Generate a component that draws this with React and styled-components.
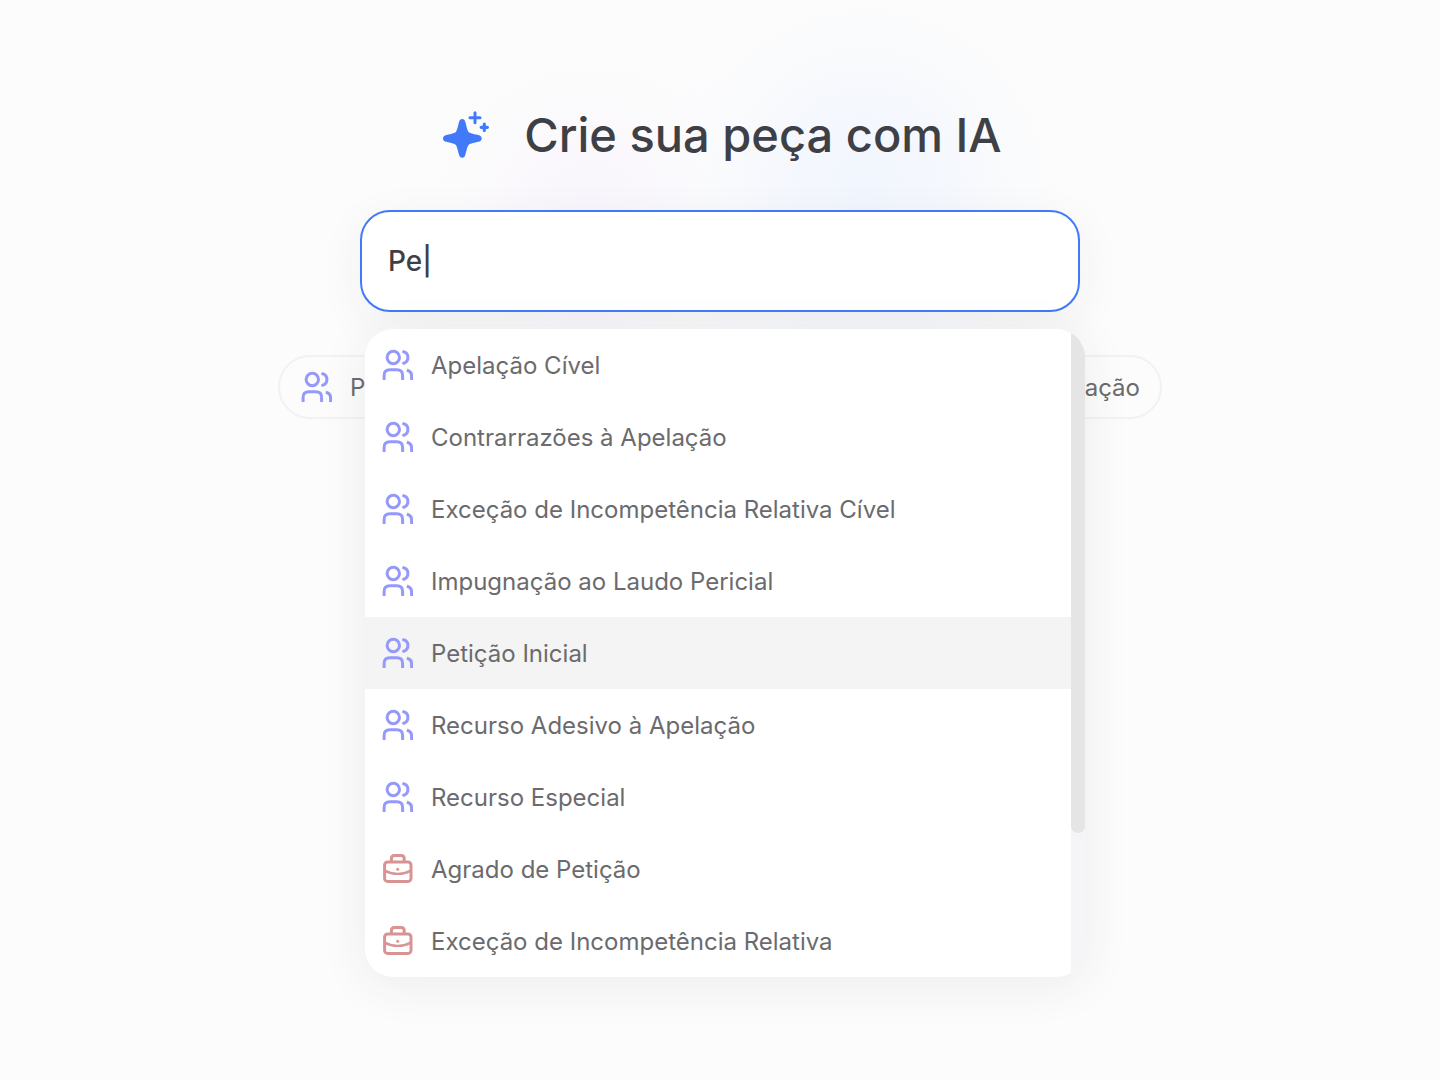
import React from "react";
import styled, { createGlobalStyle } from "styled-components";

const GlobalStyle = createGlobalStyle`
  *, *::before, *::after { box-sizing: border-box; }
  body {
    margin: 0;
    background: #fcfcfc;
    color: #3f3f46;
    font-family: Inter, "Liberation Sans", sans-serif;
  }
`;

const Page = styled.main`
  min-height: 100vh;
  padding: 104px 24px;
  display: flex;
  flex-direction: column;
  align-items: center;
  overflow: hidden;
  background:
    radial-gradient(circle at calc(50% + 145px) 190px, rgba(234, 241, 255, 0.6) 0, rgba(237, 243, 255, 0.45) 90px, rgba(243, 247, 253, 0.2) 150px, transparent 210px),
    radial-gradient(circle at calc(50% - 130px) 220px, rgba(247, 240, 252, 0.6) 0, rgba(248, 242, 252, 0.35) 80px, rgba(250, 247, 252, 0.15) 130px, transparent 200px),
    #fcfcfc;
`;

const Heading = styled.header`
  display: flex;
  align-items: center;
  gap: 34px;
  padding-left: 4px;
`;

const Title = styled.h1`
  margin: 0;
  font-size: 47px;
  line-height: 62px;
  font-weight: 500;
  white-space: nowrap;
`;

const Search = styled.div`
  position: relative;
  width: 100%;
  max-width: 720px;
  margin-top: 44px;
`;

const SearchInput = styled.input`
  display: block;
  width: 100%;
  height: 102px;
  padding: 0 26px;
  border: 2px solid #4279f8;
  border-radius: 30px;
  background: #fff;
  box-shadow: 0 12px 48px rgba(50, 50, 60, 0.06);
  color: inherit;
  font: inherit;
  font-size: 28px;
  font-weight: 500;
  outline: none;
`;

const Dropdown = styled.div`
  position: absolute;
  z-index: 1;
  top: 119px;
  left: 5px;
  width: 100%;
  display: flex;
  overflow: hidden;
  border-radius: 28px;
  background: #fff;
  box-shadow: 0 8px 48px rgba(50, 50, 60, 0.08);
`;

const Options = styled.ul`
  flex: 1;
  min-width: 0;
  margin: 0;
  padding: 0;
  list-style: none;
`;

const Option = styled.button`
  display: flex;
  align-items: center;
  gap: 18px;
  width: 100%;
  height: 72px;
  padding: 0 16px;
  border: 0;
  background: ${({ $active }) => ($active ? "#f4f4f4" : "transparent")};
  color: #6b6b6d;
  font: inherit;
  font-size: 24px;
  text-align: left;
  white-space: nowrap;
`;

const Track = styled.div`
  width: 14px;
  background: #f5f5f7;
`;

const Thumb = styled.div`
  height: 504px;
  border-radius: 0 0 7px 7px;
  background: #e5e5e5;
`;

const Suggestions = styled.nav`
  display: flex;
  justify-content: space-between;
  width: 100%;
  max-width: 884px;
  margin-top: 43px;
`;

const Pill = styled.button`
  display: flex;
  align-items: center;
  gap: 18px;
  height: 64px;
  padding: 0 20px;
  border: 2px solid #f2f2f2;
  border-radius: 32px;
  background: #fcfcfc;
  color: #6b6b6d;
  font: inherit;
  font-size: 24px;
`;

const Icon = styled.svg`
  flex: none;
  width: ${({ $size }) => $size}px;
  height: ${({ $size }) => $size}px;
  fill: none;
  stroke: ${({ $color }) => $color};
  stroke-width: 3;
`;

const SparkleIcon = () => (
  <Icon $size={48} $color="#4279f8" viewBox="0 0 48 48" aria-hidden="true">
    <path
      d="M20.2 8c1.7 0 2.700 1.200 3.100 2.800 1.700 6.500 2.200 9.100 3.300 10.200s3.800 1.700 9.600 3c2.200.5 3.500 1.600 3.500 3.400s-1.300 2.900-3.500 3.400c-5.800 1.400-8.500 2-9.600 3.100s-1.600 3.700-3.300 10.100c-.4 1.600-1.400 2.800-3.100 2.800s-2.700-1.200-3.100-2.800c-1.700-6.400-2.200-9-3.300-10.100s-3.800-1.700-9.400-3.100C2.200 30.300 1 29.200 1 27.400s1.200-2.900 3.400-3.400c5.600-1.300 8.300-1.900 9.400-3s1.600-3.700 3.300-10.200C17.500 9.200 18.500 8 20.200 8Z"
      fill="#4279f8"
      stroke="none"
    />
    <path d="M33 1.800v10M28 6.800h10" strokeLinecap="round" />
    <path d="M42.300 13.200v6.200M39.200 16.300h6.200" strokeWidth="3.200" strokeLinecap="round" />
  </Icon>
);

const UsersIcon = () => (
  <Icon $size={32} $color="#9599fa" viewBox="0 0 32 32" aria-hidden="true">
    <circle cx="12.300" cy="8.500" r="6.200" />
    <path d="M22.600 2.800c2.700.7 4.300 3 4.300 5.700s-1.600 5-4.300 5.800" strokeLinecap="round" />
    <path d="M3.100 31v-4.500c0-3.700 2.200-5.700 5.800-5.700h6.900c3.600 0 5.800 2 5.800 5.700V31" />
    <path d="M25.800 21.200c3.200.6 4.800 2.600 4.800 5.800v4" />
  </Icon>
);

const BriefcaseIcon = () => (
  <Icon $size={32} $color="#d99393" viewBox="0 0 32 32" aria-hidden="true">
    <rect x="3.600" y="9" width="26.400" height="19.400" rx="3" />
    <path d="M10.400 9V5.400c0-2 1-3 3-3h6.800c2 0 3 1 3 3V9" />
    <path d="M3.600 17.600c8 4.300 18.400 4.300 26.400 0" strokeWidth="2.400" />
    <circle cx="16.700" cy="16.300" r="1.500" fill="#d99393" stroke="none" />
  </Icon>
);

const options = [
  { label: "Apelação Cível", Glyph: UsersIcon },
  { label: "Contrarrazões à Apelação", Glyph: UsersIcon },
  { label: "Exceção de Incompetência Relativa Cível", Glyph: UsersIcon },
  { label: "Impugnação ao Laudo Pericial", Glyph: UsersIcon },
  { label: "Petição Inicial", Glyph: UsersIcon, active: true },
  { label: "Recurso Adesivo à Apelação", Glyph: UsersIcon },
  { label: "Recurso Especial", Glyph: UsersIcon },
  { label: "Agrado de Petição", Glyph: BriefcaseIcon },
  { label: "Exceção de Incompetência Relativa", Glyph: BriefcaseIcon },
];

export default function App() {
  return (
    <>
      <GlobalStyle />
      <Page>
        <Heading>
          <SparkleIcon />
          <Title id="title">Crie sua peça com IA</Title>
        </Heading>
        <Search>
          <SearchInput type="text" aria-labelledby="title" defaultValue="Pe|" />
          <Dropdown>
            <Options>
              {options.map(({ label, Glyph, active }) => (
                <li key={label}>
                  <Option type="button" $active={active}>
                    <Glyph />
                    {label}
                  </Option>
                </li>
              ))}
            </Options>
            <Track>
              <Thumb />
            </Track>
          </Dropdown>
        </Search>
        <Suggestions>
          <Pill type="button">
            <UsersIcon />
            Petição
          </Pill>
          <Pill type="button">
            <UsersIcon />
            Apelação
          </Pill>
        </Suggestions>
      </Page>
    </>
  );
}
